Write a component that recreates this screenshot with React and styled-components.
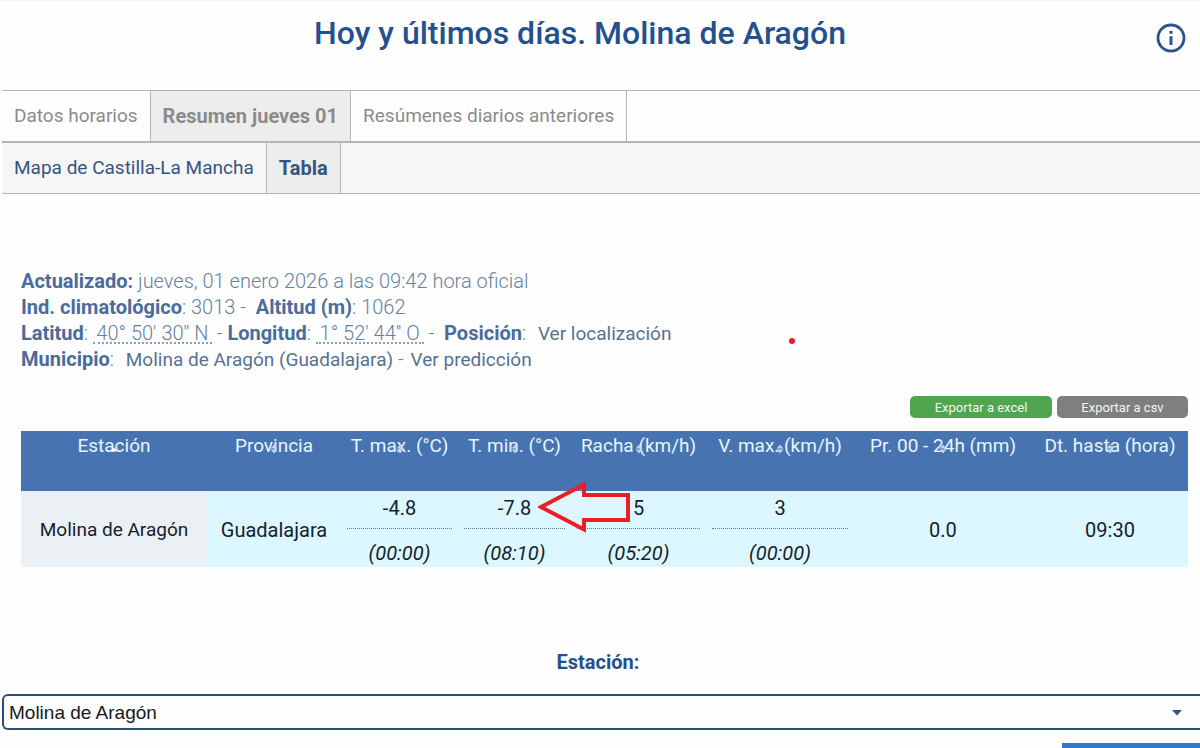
import { useState } from "react";
import styled, { createGlobalStyle } from "styled-components";

const columns = [
  { name: "Estación", width: 186, sorted: true },
  { name: "Provincia", width: 134 },
  { name: "T. max. (°C)", width: 117 },
  { name: "T. min. (°C)", width: 113 },
  { name: "Racha (km/h)", width: 135 },
  { name: "V. max. (km/h)", width: 148 },
  { name: "Pr. 00 - 24h (mm)", width: 178 },
  { name: "Dt. hasta (hora)", width: 156 },
];

const SortIcon = ({ sorted }) => (
  <Sort viewBox="0 0 8 10" $sorted={sorted} aria-hidden="true">
    <path d={sorted ? "M4 3.5 7.4 7.5H.6Z" : "M4 .6 7.4 4.4H.6Z"} />
    {sorted ? null : <path d="M4 9.4.6 5.6H7.4Z" />}
  </Sort>
);

const Measure = ({ value, time, children }) => (
  <MeasureCell>
    <Value>{value}</Value>
    <Time>({time})</Time>
    {children}
  </MeasureCell>
);

const App = () => {
  const [station, setStation] = useState("Molina de Aragón");

  return (
    <>
      <GlobalStyle />
      <Page>
        <Header>
          <Title>Hoy y últimos días. Molina de Aragón</Title>
          <InfoButton type="button" aria-label="Información">
            <svg viewBox="0 0 30 30" width="30" height="30">
              <circle cx="15" cy="15" r="13" fill="none" strokeWidth="2.8" />
              <path d="M15 13.2V22" fill="none" strokeWidth="3" />
              <path d="M15 7.8V10.8" fill="none" strokeWidth="3" />
            </svg>
          </InfoButton>
        </Header>

        <Tabs>
          <Tab href="#horarios">Datos horarios</Tab>
          <Tab href="#resumen" $active>
            Resumen jueves 01
          </Tab>
          <Tab href="#anteriores">Resúmenes diarios anteriores</Tab>
        </Tabs>
        <Tabs $sub>
          <Tab href="#mapa" $sub>
            Mapa de Castilla-La Mancha
          </Tab>
          <Tab href="#tabla" $sub $active>
            Tabla
          </Tab>
        </Tabs>

        <Content>
          <Details>
            <p>
              <b>Actualizado:</b> jueves, 01 enero 2026 a las 09:42 hora oficial
            </p>
            <p>
              <b>Ind. climatológico</b>: 3013 -&nbsp; <b>Altitud (m)</b>: 1062
            </p>
            <p>
              <b>Latitud</b>: <Coord $width={119}>40° 50' 30'' N</Coord> -{" "}
              <b>Longitud</b>: <Coord $width={108}>1° 52' 44'' O</Coord>{" "}
              -&nbsp; <b>Posición</b>: &nbsp;
              <a href="#localizacion">Ver localización</a>
            </p>
            <p>
              <b>Municipio</b>: &nbsp;
              <a href="#municipio">Molina de Aragón (Guadalajara)</a> -{" "}
              <a href="#prediccion">Ver predicción</a>
            </p>
            <Dot />
          </Details>

          <Exports>
            <ExportButton type="button" $color="#4fa64f" $width={142}>
              Exportar a excel
            </ExportButton>
            <ExportButton type="button" $color="#7f7f7f" $width={131}>
              Exportar a csv
            </ExportButton>
          </Exports>

          <Table>
            <colgroup>
              {columns.map((col) => (
                <Col key={col.name} $width={col.width} />
              ))}
            </colgroup>
            <thead>
              <tr>
                {columns.map((col) => (
                  <th key={col.name} scope="col">
                    {col.name}
                    <SortIcon sorted={col.sorted} />
                  </th>
                ))}
              </tr>
            </thead>
            <tbody>
              <tr>
                <TextCell $station>Molina de Aragón</TextCell>
                <TextCell>Guadalajara</TextCell>
                <Measure value="-4.8" time="00:00" />
                <Measure value="-7.8" time="08:10">
                  <Arrow viewBox="0 0 94 54" aria-hidden="true">
                    <path d="M3 27 46 4.5V15H90V40H46V49.5Z" />
                  </Arrow>
                </Measure>
                <Measure value="5" time="05:20" />
                <Measure value="3" time="00:00" />
                <TextCell>0.0</TextCell>
                <TextCell>09:30</TextCell>
              </tr>
            </tbody>
          </Table>
        </Content>

        <StationForm onSubmit={(e) => e.preventDefault()}>
          <label htmlFor="station">Estación:</label>
          <SelectBox>
            <select
              id="station"
              value={station}
              onChange={(e) => setStation(e.target.value)}
            >
              <option>Molina de Aragón</option>
            </select>
            <svg viewBox="0 0 10 6" width="10" height="6" aria-hidden="true">
              <path d="M0 0H10L5 5.5Z" />
            </svg>
          </SelectBox>
          <SubmitButton type="submit" aria-label="Seleccionar" />
        </StationForm>
      </Page>
    </>
  );
};

export default App;

const GlobalStyle = createGlobalStyle`
  * {
    box-sizing: border-box;
  }
  body {
    margin: 0;
    background: #fefefe;
    font-family: Roboto, "Noto Sans", sans-serif;
    font-size: 20px;
    line-height: 26px;
  }
  p {
    margin: 0;
  }
  a {
    color: inherit;
    text-decoration: none;
  }
  button {
    border: none;
    cursor: pointer;
  }
`;

const Page = styled.main`
  height: 100vh;
  padding-left: 2px;
  overflow: hidden;
  border-top: 1px solid #f4f5f7;
`;

const Header = styled.header`
  display: grid;
  grid-template-columns: 44px 1fr 44px;
  height: 89px;
  padding: 12px 0;
`;

const Title = styled.h1`
  grid-column: 2;
  margin: 0;
  padding-right: 42px;
  text-align: center;
  font-size: 32px;
  line-height: 40px;
  font-weight: 500;
  color: #24508d;
`;

const InfoButton = styled.button`
  width: 30px;
  height: 30px;
  margin-top: 10px;
  padding: 0;
  background: none;
  stroke: #2a5390;
`;

const Tabs = styled.nav`
  display: flex;
  height: ${(props) => (props.$sub ? "53px" : "51px")};
  border-top: ${(props) => (props.$sub ? "2px" : "1px")} solid #b5b5b5;
  border-bottom: ${(props) => (props.$sub ? "1px solid #b5b5b5" : "none")};
  background: ${(props) => (props.$sub ? "#f6f6f6" : "#fefefe")};
`;

const Tab = styled.a`
  display: flex;
  align-items: center;
  padding: 0 12px;
  border-right: 1px solid #b5b5b5;
  background: ${(props) => (props.$active ? "#ededed" : "none")};
  color: ${(props) => (props.$sub ? "#35557f" : "#8b8b8b")};
  font-size: ${(props) => (props.$active ? "20px" : "19px")};
  font-weight: ${(props) => (props.$active ? 700 : 400)};
`;

const Content = styled.section`
  padding: 74px 12px 0 19px;
`;

const Details = styled.div`
  position: relative;
  color: #65819f;
  font-weight: 300;
  b {
    font-weight: 700;
    color: #4a6c9d;
  }
  a {
    margin-left: 2px;
    font-size: 19px;
    line-height: 20px;
    font-weight: 400;
    color: #567290;
  }
`;

const Coord = styled.abbr`
  display: inline-block;
  min-width: ${(props) => props.$width}px;
  line-height: 18px;
  text-align: center;
  border-bottom: 2px dotted #8aa0b8;
`;

const Dot = styled.span`
  position: absolute;
  left: 768px;
  top: 70px;
  width: 6px;
  height: 6px;
  border-radius: 50%;
  background: #ee1c25;
`;

const Exports = styled.div`
  display: flex;
  justify-content: flex-end;
  gap: 5px;
  margin: 24px 0 13px;
`;

const ExportButton = styled.button`
  width: ${(props) => props.$width}px;
  height: 22px;
  padding: 0;
  border-radius: 5px;
  background: ${(props) => props.$color};
  color: #f4f6f4;
  font-family: inherit;
  font-size: 13px;
`;

const Table = styled.table`
  width: 100%;
  table-layout: fixed;
  border-collapse: collapse;
  text-align: center;
  color: #16222b;
  th {
    position: relative;
    height: 60px;
    padding: 2px 0 0;
    vertical-align: top;
    white-space: nowrap;
    background: #4873b1;
    color: #e6f5ff;
    font-size: 19px;
    font-weight: 400;
  }
  td {
    height: 76px;
    padding: 0;
    background: #dcf7ff;
  }
`;

const Col = styled.col`
  width: ${(props) => props.$width}px;
`;

const Sort = styled.svg`
  position: absolute;
  top: 13px;
  left: calc(50% - 4px);
  width: 8px;
  height: 10px;
  fill: ${(props) => (props.$sorted ? "#ffffff" : "#b9d3f5")};
`;

const TextCell = styled.td`
  && {
    padding-top: 2px;
    background: ${(props) => (props.$station ? "#ebf0f5" : "#dcf7ff")};
    font-size: ${(props) => (props.$station ? "19px" : "20px")};
  }
`;

const MeasureCell = styled.td`
  position: relative;
`;

const Value = styled.div`
  height: 38px;
  margin: 0 6px;
  padding-top: 4px;
  border-bottom: 1px dotted #5f7f8c;
`;

const Time = styled.div`
  height: 38px;
  padding-top: 11px;
  font-style: italic;
`;

const Arrow = styled.svg`
  position: absolute;
  z-index: 1;
  left: 80px;
  top: -11px;
  width: 94px;
  height: 54px;
  fill: none;
  stroke: #ee1c25;
  stroke-width: 4;
`;

const StationForm = styled.form`
  display: flex;
  flex-direction: column;
  padding-top: 82px;
  label {
    align-self: center;
    margin-bottom: 19px;
    padding-right: 6px;
    font-weight: 700;
    color: #24508d;
  }
`;

const SelectBox = styled.div`
  position: relative;
  select {
    display: block;
    appearance: none;
    width: 100%;
    height: 36px;
    padding: 0 30px 0 5px;
    border: 2px solid #2b4e74;
    border-right: none;
    border-radius: 6px 0 0 6px;
    background: #fefefe;
    color: #16191c;
    font-family: "Liberation Sans", Arial, sans-serif;
    font-size: 19px;
  }
  svg {
    position: absolute;
    right: 18px;
    top: 16px;
    fill: #35557f;
    pointer-events: none;
  }
`;

const SubmitButton = styled.button`
  align-self: flex-end;
  width: 138px;
  height: 40px;
  margin-top: 13px;
  background: #2e7ad1;
`;
